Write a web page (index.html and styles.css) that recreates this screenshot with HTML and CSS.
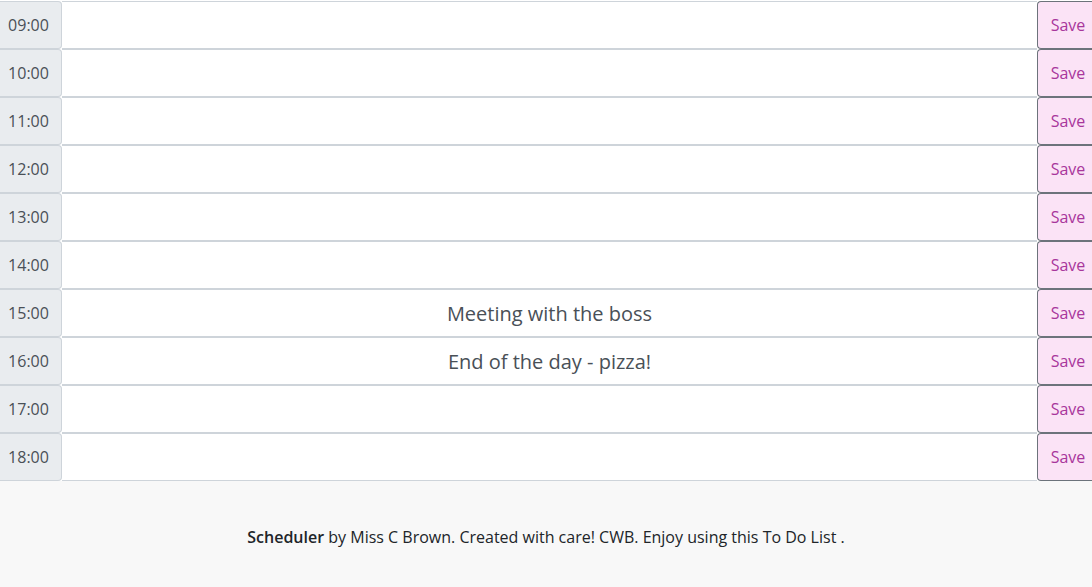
FILE: index.html
```html
<!DOCTYPE html>
<html>
<head>
<meta charset="utf-8">
<link rel="stylesheet" href="styles.css">
</head>
<body>
<main class="planner">
  <div class="row"><span class="hour">09:00</span><textarea class="task"></textarea><button class="save">Save</button></div>
  <div class="row"><span class="hour">10:00</span><textarea class="task"></textarea><button class="save">Save</button></div>
  <div class="row"><span class="hour">11:00</span><textarea class="task"></textarea><button class="save">Save</button></div>
  <div class="row"><span class="hour">12:00</span><textarea class="task"></textarea><button class="save">Save</button></div>
  <div class="row"><span class="hour">13:00</span><textarea class="task"></textarea><button class="save">Save</button></div>
  <div class="row"><span class="hour">14:00</span><textarea class="task"></textarea><button class="save">Save</button></div>
  <div class="row"><span class="hour">15:00</span><textarea class="task">Meeting with the boss</textarea><button class="save">Save</button></div>
  <div class="row"><span class="hour">16:00</span><textarea class="task">End of the day - pizza!</textarea><button class="save">Save</button></div>
  <div class="row"><span class="hour">17:00</span><textarea class="task"></textarea><button class="save">Save</button></div>
  <div class="row"><span class="hour">18:00</span><textarea class="task"></textarea><button class="save">Save</button></div>
</main>
<footer class="footer">
  <p><strong>Scheduler</strong> by Miss C Brown. Created with care! CWB. Enjoy using this To Do List .</p>
</footer>
</body>
</html>
```
FILE: styles.css
```css
html, body {
  margin: 0;
  padding: 0;
  background: #f8f8f8;
  font-family: "Open Sans", "Liberation Sans", sans-serif;
}
.planner {
  display: flex;
  flex-direction: column;
  padding-top: 1px;
  background: #fff;
}
.row {
  display: flex;
  height: 48px;
  box-sizing: border-box;
  background: #fff;
}
.hour {
  width: 62px;
  box-sizing: border-box;
  display: flex;
  align-items: center;
  justify-content: center;
  padding-right: 4px;
  background: #e9ecef;
  border-top: 1px solid #ced4da;
  border-bottom: 1px solid #ced4da;
  border-right: 1px solid #ced4da;
  border-radius: 0 4px 4px 0;
  color: #495057;
  font-size: 16px;
}
.task {
  flex: 1;
  box-sizing: border-box;
  margin: 0;
  border: none;
  border-top: 1px solid #ced4da;
  border-bottom: 1px solid #ced4da;
  resize: none;
  font-family: "Open Sans", "Liberation Sans", sans-serif;
  font-size: 20px;
  color: #495057;
  text-align: center;
  padding: 12px 8px 0;
  line-height: 24px;
  overflow: hidden;
  outline: none;
  background: #fff;
}
.save {
  width: 55px;
  box-sizing: border-box;
  margin: 0;
  background: #fbe3f6;
  border: 1px solid #6c737b;
  border-right: none;
  border-radius: 4px 0 0 4px;
  color: #a8369c;
  font-family: "Open Sans", "Liberation Sans", sans-serif;
  font-size: 16px;
  padding: 0 0 0 6px;
}
.footer {
  height: 106px;
  display: flex;
  align-items: center;
  justify-content: center;
}
.footer p {
  margin: 0;
  font-size: 16px;
  color: #212529;
  padding-top: 6px;
}
.footer strong {
  font-weight: 600;
}
```
